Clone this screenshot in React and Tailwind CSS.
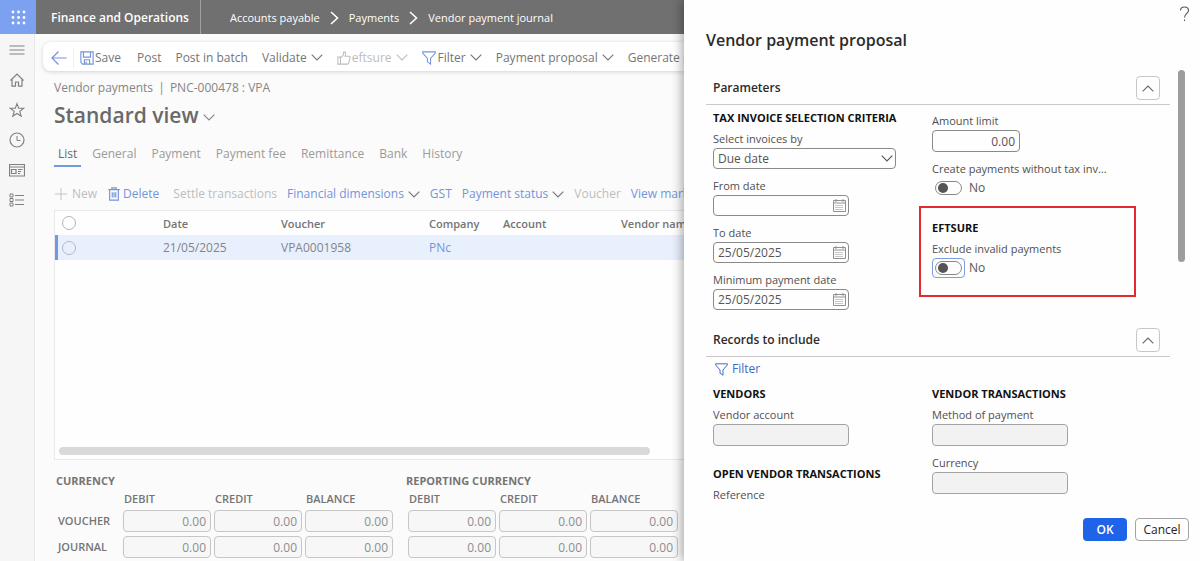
import { useState } from 'react';
import clsx from 'clsx';

const crumbs = ['Accounts payable', 'Payments', 'Vendor payment journal'];
const tabs = ['List', 'General', 'Payment', 'Payment fee', 'Remittance', 'Bank', 'History'];
const totals = [
  { title: 'CURRENCY', labelled: true },
  { title: 'REPORTING CURRENCY', labelled: false },
];

function Icon({ size = 14, box = 16, className, children }) {
  return (
    <svg width={size} height={size} viewBox={`0 0 ${box} ${box}`} fill="none" stroke="currentColor" strokeWidth="1" className={clsx('shrink-0', className)} aria-hidden="true">
      {children}
    </svg>
  );
}

function Chevron({ className }) {
  return (
    <svg width="12" height="7" viewBox="0 0 12 7" fill="none" stroke="currentColor" strokeWidth="1.1" className={clsx('shrink-0', className)} aria-hidden="true">
      <path d="M0.7 0.7 6 6 11.3 0.7" />
    </svg>
  );
}

function FilterIcon({ size = 14, className }) {
  return (
    <Icon size={size} className={className}>
      <path d="M0.8 1h14.4v1.4L9.8 8.6V15L6.2 12.4V8.6L0.8 2.4z" strokeWidth="1.2" />
    </Icon>
  );
}

function CalendarIcon() {
  return (
    <svg width="13" height="13" viewBox="0 0 13 13" fill="none" stroke="currentColor" strokeWidth="1" aria-hidden="true">
      <path d="M0.5 1.5h12v11h-12zM0.5 4h12M3 0v3M10 0v3" />
      <path d="M2.5 6.5h8M2.5 8.5h8M2.5 10.5h8" strokeDasharray="1 1" />
    </svg>
  );
}

const railItems = [
  { name: 'Expand navigation', icon: <Icon size={16}><path d="M0.5 4h15M0.5 8h15M0.5 12h15" /></Icon> },
  { name: 'Home', icon: <Icon size={16}><path d="M1.500 8.500 8 2l6.500 6.500M3 7.200v7h3.500V10h3v4.200H13v-7" strokeWidth="1.2" /></Icon> },
  { name: 'Favorites', icon: <Icon size={16}><path d="M8 1.600 9.700 6.100l5 .2-3.900 3.100 1.400 4.900L8 11.500l-4.200 2.800 1.400-4.900L1.300 6.300l5-.2z" strokeWidth="1.1" /></Icon> },
  { name: 'Recent', icon: <Icon size={16}><circle cx="8" cy="8" r="7" strokeWidth="1.2" /><path d="M8 4v4.500h3.500" /></Icon> },
  { name: 'Workspaces', icon: <Icon size={16}><path d="M0.500 2.500h15v11.500h-15zM0.500 5h15M2.500 7.500h4.500v4h-4.500zM9 7.500h4.500M9 9.500h3M9 11.500h2" strokeWidth="1.2" /></Icon> },
  { name: 'Modules', icon: <Icon size={16}><path d="M1 2h3v3H1zM1 6.500h3v3H1zM1 11h3v3H1zM6 3.500h9M6 8h9M6 12.500h9" /></Icon> },
];

function Command({ icon, menu, muted, children }) {
  return (
    <button className={clsx('flex shrink-0 items-center whitespace-nowrap', muted ? 'text-[#bdbdbd]' : 'text-[#757575]')}>
      {icon}
      {children}
      {menu && <Chevron className="ml-1" />}
    </button>
  );
}

function GridCommand({ icon, menu, muted, children }) {
  return (
    <button className={clsx('flex shrink-0 items-center whitespace-nowrap', muted ? 'text-[#bdbdbd]' : 'text-[#7394dc]')}>
      {icon}
      {children}
      {menu && <Chevron className="ml-1 text-[#757575]" />}
    </button>
  );
}

function Totals({ title, labelled }) {
  return (
    <table className="text-left text-[11px] text-[#757575]">
      <caption className="h-[18px] pt-px text-left font-bold text-[#757575]">{title}</caption>
      <thead>
        <tr className="h-[18px]">
          {labelled && <td className="w-[66px]" />}
          {['DEBIT', 'CREDIT', 'BALANCE'].map((name) => (
            <th key={name} scope="col" className={clsx('w-[91px] p-0 font-semibold', labelled ? 'pl-[2px]' : 'pl-[3px]')}>{name}</th>
          ))}
        </tr>
      </thead>
      <tbody>
        {['VOUCHER', 'JOURNAL'].map((row) => (
          <tr key={row} className="h-[26px]">
            {labelled && <th scope="row" className="pl-[2px] font-semibold">{row}</th>}
            {['debit', 'credit', 'balance'].map((name) => (
              <td key={name} className={labelled ? 'pl-px' : 'pl-[2px]'}>
                <input readOnly value="0.00" aria-label={`${title} ${row} ${name}`} className="block h-[22px] w-[88px] rounded border border-[#c6c6c6] bg-[#f7f7f7] px-1 text-right text-[12px] text-[#8d8d8d]" />
              </td>
            ))}
          </tr>
        ))}
      </tbody>
    </table>
  );
}

function Journal() {
  const [tab, setTab] = useState('List');

  return (
    <main className="flex min-w-0 flex-1 flex-col overflow-hidden bg-[#fbfbfb] pt-2 pl-2">
      <div className="flex h-[29px] shrink-0 items-center gap-3.5 rounded-l-lg bg-white pt-0.5 pl-2 shadow-[0_1px_4px_rgba(0,0,0,0.16)]">
        <div className="flex items-center pr-0.5">
          <button aria-label="Back" className="mr-1.5 text-[#7394dc]">
            <Icon size={16}><path d="M15.500 8H1M7.500 1.500 1 8l6.500 6.500" strokeWidth="1.2" /></Icon>
          </button>
          <span className="mr-1.5 h-5 w-px bg-[#efefef]" />
          <Command icon={<Icon className="mr-px text-[#7394dc]"><path d="M1 1h14v14H3l-2-2zM4 1v6h8V1M5 15v-5h6v5M7 12v3" strokeWidth="1.3" /></Icon>}>Save</Command>
        </div>
        <Command>Post</Command>
        <Command>Post in batch</Command>
        <Command menu>Validate</Command>
        <Command menu muted icon={<Icon className="mr-px"><path d="M1 7h3v8H1zM4 8l3-3 .8-4c1.800 0 2.200 1.200 2 2.500L9.300 6H14c1 0 1.300.8 1 1.800l-1.600 6c-.2.700-.6 1.200-1.400 1.200H4" strokeWidth="1.2" /></Icon>}>eftsure</Command>
        <Command menu icon={<FilterIcon className="mr-0.5 text-[#7394dc]" />}>Filter</Command>
        <Command menu>Payment proposal</Command>
        <Command>Generate payments</Command>
      </div>

      <div className="flex min-h-0 flex-1 flex-col pl-[11px]">
        <p className="mt-[9px] h-4 leading-4 text-[#858585]">
          Vendor payments <span className="mx-0.5">|</span> PNC-000478 : VPA
        </p>
        <h1 className="mt-[5px] h-7 text-[21px] leading-7 font-semibold text-[#696969]">
          <button className="flex items-center gap-1">Standard view <Chevron className="mt-1 text-[#858585]" /></button>
        </h1>

        <div role="tablist" className="mt-4 flex h-[22px] shrink-0 gap-[7px]">
          {tabs.map((name) => (
            <button key={name} role="tab" aria-selected={tab === name} onClick={() => setTab(name)} className={clsx('border-b-2 px-1 pb-0.5', tab === name ? 'border-[#6d9bdc] text-[#696969]' : 'border-transparent text-[#9a9a9a]')}>
              {name}
            </button>
          ))}
        </div>

        <div className="mt-4 flex h-[22px] shrink-0 items-center gap-2.5">
          <div className="flex gap-2.5 pr-1">
            <GridCommand muted icon={<Icon className="mr-1"><path d="M8 1v14M1 8h14" /></Icon>}>New</GridCommand>
            <GridCommand icon={<Icon className="mr-0.5"><path d="M1.500 3h13M5.500 3V1h5v2M3 3v12h10V3M6 6v6M8 6v6M10 6v6" strokeWidth="1.3" /></Icon>}>Delete</GridCommand>
          </div>
          <GridCommand muted>Settle transactions</GridCommand>
          <GridCommand menu>Financial dimensions</GridCommand>
          <GridCommand>GST</GridCommand>
          <GridCommand menu>Payment status</GridCommand>
          <GridCommand muted>Voucher</GridCommand>
          <GridCommand>View marked</GridCommand>
        </div>

        <div className="mt-[5px] flex min-h-0 flex-1 flex-col justify-between border border-r-0 border-[#e9e9e9] bg-[#fefefe]">
          <table className="w-full table-fixed text-left whitespace-nowrap">
            <colgroup>
              <col className="w-[108px]" />
              <col className="w-[118px]" />
              <col className="w-[148px]" />
              <col className="w-[74px]" />
              <col className="w-[118px]" />
              <col />
            </colgroup>
            <thead className="text-[11px] text-[#747474]">
              <tr className="h-6">
                <th className="pl-[7px]"><input type="checkbox" aria-label="Select all rows" className="block size-3.5 appearance-none rounded-full border border-[#b5b5b5]" /></th>
                <th className="pt-0.5 font-semibold">Date</th>
                <th className="pt-0.5 font-semibold">Voucher</th>
                <th className="pt-0.5 font-semibold">Company</th>
                <th className="pt-0.5 font-semibold">Account</th>
                <th className="pt-0.5 font-semibold">Vendor name</th>
              </tr>
            </thead>
            <tbody>
              <tr className="h-[25px] bg-[#e9f0fd] text-[#858585] shadow-[inset_3px_0_0_#7396ec]">
                <td className="pl-[7px]"><input type="checkbox" aria-label="Select row" className="block size-3.5 appearance-none rounded-full border border-[#b0b8c8]" /></td>
                <td>21/05/2025</td>
                <td>VPA0001958</td>
                <td><a href="#company" className="text-[#7394dc]">PNc</a></td>
                <td />
                <td />
              </tr>
            </tbody>
          </table>
          <div className="mb-1 ml-1 h-2 w-[591px] rounded-full bg-[#d9d9d9]" />
        </div>

        <div className="mt-3 flex shrink-0 gap-[11px] pb-px pl-[2px]">
          {totals.map((group) => <Totals key={group.title} {...group} />)}
        </div>
      </div>
    </main>
  );
}

function Section({ title, children }) {
  const [open, setOpen] = useState(true);

  return (
    <section>
      <div className="flex h-[35px] items-center justify-between border-b border-[#c9c9c9] pt-0.5 pr-2.5 pl-[7px]">
        <h3 className="font-semibold text-[#2b2b2b]">{title}</h3>
        <button aria-label={`Toggle ${title}`} aria-expanded={open} onClick={() => setOpen(!open)} className="flex size-6 items-center justify-center rounded border border-[#c6c6c6] text-[#666]">
          <Chevron className={clsx(open && 'rotate-180')} />
        </button>
      </div>
      {open && children}
    </section>
  );
}

function Heading({ children }) {
  return <h4 className="h-5 text-[11px] leading-5 font-bold whitespace-nowrap text-[#111]">{children}</h4>;
}

function Field({ id, label, children }) {
  return (
    <div className="mb-2">
      <label htmlFor={id} className="block h-[18px] truncate text-[11px] leading-[18px] font-medium text-[#505050]">{label}</label>
      {children}
    </div>
  );
}

function DateField({ id, label, value }) {
  return (
    <Field id={id} label={label}>
      <div className="flex h-[21px] w-[136px] items-center rounded border border-[#8a8a8a] pr-0.5 pl-1">
        <input id={id} defaultValue={value} className="h-full min-w-0 flex-1 text-[#555] outline-none" />
        <button aria-label={`Pick ${label}`} className="text-[#909090]"><CalendarIcon /></button>
      </div>
    </Field>
  );
}

function Toggle({ id, label, focused }) {
  const [on, setOn] = useState(false);

  return (
    <Field id={id} label={label}>
      <div className="flex h-5 items-center gap-1 text-[#555]">
        <span className={clsx('flex rounded-sm border p-0.5', focused ? 'border-[#7d9de0]' : 'border-transparent')}>
          <input id={id} type="checkbox" role="switch" checked={on} onChange={() => setOn(!on)} className="h-3.5 w-[27px] appearance-none rounded-full border border-[#888] before:m-px before:ml-0.5 before:block before:size-2.5 before:rounded-full before:bg-[#555] checked:before:ml-3.5" />
        </span>
        {on ? 'Yes' : 'No'}
      </div>
    </Field>
  );
}

function TextField({ id, label }) {
  return (
    <Field id={id} label={label}>
      <input id={id} readOnly className="block h-[22px] w-[136px] rounded border border-[#a3a3a3] bg-[#f2f2f2] px-1" />
    </Field>
  );
}

function ProposalDialog() {
  return (
    <aside role="dialog" aria-label="Vendor payment proposal" className="absolute inset-y-0 right-0 flex w-[516px] flex-col bg-[#fefefe] pl-[22px] shadow-[-2px_0_10px_rgba(0,0,0,0.35)]">
      <button aria-label="Help" className="absolute top-1.5 right-2.5 text-[#555]">
        <svg width="11" height="16" viewBox="0 0 11 16" fill="none" stroke="currentColor" strokeWidth="1.1" aria-hidden="true">
          <path d="M1.500 4.500C1.500 2.300 3.200 1 5.500 1s4 1.300 4 3.500c0 3-4 3.500-4 7M5.500 13.500v1.500" />
        </svg>
      </button>
      <h2 className="mt-7 h-6 shrink-0 text-base leading-6 font-semibold text-[#2b2b2b]">Vendor payment proposal</h2>

      <div className="mt-[18px] flex min-h-0 flex-1 justify-between">
        <div className="mr-2 min-w-0 flex-1 overflow-hidden">
          <Section title="Parameters">
            <div className="grid h-[217px] grid-cols-[219px_1fr] pl-[7px]">
              <div className="pt-[3px]">
                <Heading>TAX INVOICE SELECTION CRITERIA</Heading>
                <div className="mt-0.5">
                  <Field id="select-by" label="Select invoices by">
                    <div className="relative w-[183px]">
                      <select id="select-by" className="block h-[21px] w-full appearance-none rounded border border-[#8a8a8a] px-1 text-[#555]">
                        <option>Due date</option>
                        <option>Cash discount</option>
                      </select>
                      <Chevron className="pointer-events-none absolute top-[7px] right-[3px] text-[#555]" />
                    </div>
                  </Field>
                  <DateField id="from-date" label="From date" value="" />
                  <DateField id="to-date" label="To date" value="25/05/2025" />
                  <DateField id="min-date" label="Minimum payment date" value="25/05/2025" />
                </div>
              </div>
              <div className="pt-[7px]">
                <Field id="amount-limit" label="Amount limit">
                  <input id="amount-limit" defaultValue="0.00" className="block h-[22px] w-[88px] rounded border border-[#8a8a8a] px-1 text-right text-[#555]" />
                </Field>
                <div className="w-[180px]">
                  <Toggle id="without-invoice" label="Create payments without tax invoice" />
                </div>
                <div className="-ml-[13px] h-[91px] w-[217px] border-2 border-[#e4282d] pt-2.5 pl-[11px]">
                  <Heading>EFTSURE</Heading>
                  <div className="mt-0.5">
                    <Toggle id="exclude-invalid" label="Exclude invalid payments" focused />
                  </div>
                </div>
              </div>
            </div>
          </Section>

          <Section title="Records to include">
            <div className="pl-[7px]">
              <button className="ml-0.5 flex h-6 items-center gap-1 text-[#3d68c4]"><FilterIcon size={13} /> Filter</button>
              <div className="grid grid-cols-[219px_1fr] pt-[3px]">
                <div>
                  <Heading>VENDORS</Heading>
                  <div className="mt-0.5 mb-[18px]">
                    <TextField id="vendor-account" label="Vendor account" />
                  </div>
                  <Heading>OPEN VENDOR TRANSACTIONS</Heading>
                  <p className="mt-0.5 h-[18px] text-[11px] leading-[18px] font-medium text-[#505050]">Reference</p>
                </div>
                <div>
                  <Heading>VENDOR TRANSACTIONS</Heading>
                  <div className="mt-0.5">
                    <TextField id="method" label="Method of payment" />
                    <TextField id="currency" label="Currency" />
                  </div>
                </div>
              </div>
            </div>
          </Section>
        </div>
        <div className="mr-[15px] h-[192px] w-[7px] rounded-full bg-[#9d9d9d]" />
      </div>

      <div className="mt-2 mb-5 flex shrink-0 justify-end gap-2 pr-[11px]">
        <button className="h-[23px] w-11 rounded bg-[#1f64e8] font-semibold text-white">OK</button>
        <button className="h-[23px] w-[54px] rounded border border-[#a3a3a3] font-medium text-[#242424]">Cancel</button>
      </div>
    </aside>
  );
}

export default function App() {
  return (
    <div className="relative flex h-screen flex-col overflow-hidden bg-[#fbfbfb] font-['Open_Sans',sans-serif] text-[12px] leading-4">
      <header className="flex h-[34px] shrink-0 items-center bg-[#707070] text-white">
        <button aria-label="App launcher" className="flex h-full w-9 items-center justify-center bg-[#7ba1f0]">
          <svg width="15" height="15" viewBox="0 0 15 15" fill="currentColor" aria-hidden="true">
            {[2, 7.5, 13].map((y) => [2, 7.5, 13].map((x) => <circle key={`${x}-${y}`} cx={x} cy={y} r="1.4" />))}
          </svg>
        </button>
        <strong className="pt-px pr-[11px] pl-[15px] font-semibold whitespace-nowrap">Finance and Operations</strong>
        <nav className="flex h-full items-center gap-2.5 border-l border-[#a0a0a0] pt-px pl-[29px] text-[11px]">
          {crumbs.map((name, index) => (
            <span key={name} className="flex items-center gap-2.5 whitespace-nowrap">
              {index > 0 && <svg width="9" height="14" viewBox="0 0 9 14" fill="none" stroke="currentColor" strokeWidth="1.6" aria-hidden="true"><path d="M1 1l6.500 6L1 13" /></svg>}
              <a href="#module">{name}</a>
            </span>
          ))}
        </nav>
      </header>
      <div className="flex min-h-0 flex-1">
        <nav className="flex w-[35px] shrink-0 flex-col items-center border-r border-[#e9e9e9] bg-[#f6f6f6] pt-px text-[#808080]">
          {railItems.map((item) => (
            <button key={item.name} aria-label={item.name} className="flex h-[30px] w-full items-center justify-center">{item.icon}</button>
          ))}
        </nav>
        <Journal />
      </div>
      <ProposalDialog />
    </div>
  );
}
